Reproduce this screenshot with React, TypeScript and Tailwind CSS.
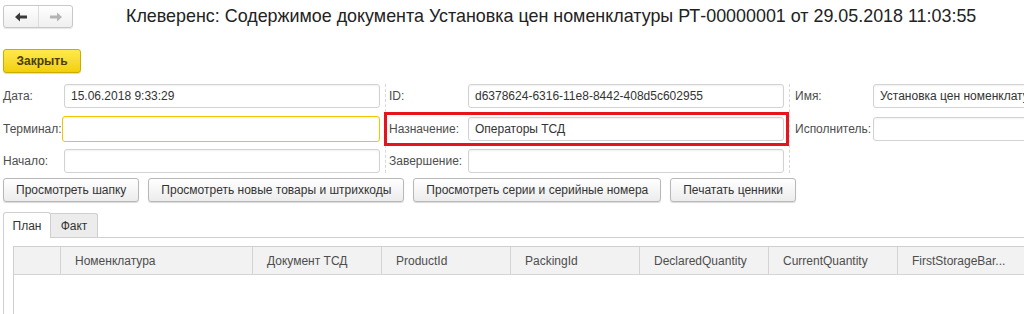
import { ReactNode } from "react";

const font = { fontFamily: '"Liberation Sans", Arial, sans-serif' };

const Arrow = ({ dir, color }: { dir: "left" | "right"; color: string }) => (
  <svg width="12" height="10" viewBox="0 0 12 10">
    <g transform={dir === "right" ? "translate(12,0) scale(-1,1)" : undefined} fill={color}>
      <path d="M0 5 L5 0.5 L5 3.5 L12 3.5 L12 6.5 L5 6.5 L5 9.5 Z" />
    </g>
  </svg>
);

const Field = ({ value, className = "" }: { value?: string; className?: string }) => (
  <div
    className={`h-[24px] rounded-[3px] border bg-white pl-[6px] text-[12px] leading-[22px] text-[#333] whitespace-nowrap overflow-hidden shadow-[inset_0_1px_2px_rgba(0,0,0,0.06)] ${
      className || "border-[#d2d2d2]"
    }`}
  >
    {value}
  </div>
);

const Row = ({ label, labelW, children, extra = "" }: { label: string; labelW: string; children: ReactNode; extra?: string }) => (
  <div className={`flex items-center h-[24px] ${extra}`}>
    <div className={`${labelW} shrink-0 text-[12px] text-[#4d4d4d]`}>{label}</div>
    <div className="flex-1 min-w-0">{children}</div>
  </div>
);

const Btn = ({ children }: { children: ReactNode }) => (
  <button className="h-[24px] px-[12px] rounded-[3px] border border-[#b8b8b8] bg-gradient-to-b from-white to-[#ececec] text-[12px] text-[#333] shadow-[0_1px_1px_rgba(0,0,0,0.15)]">
    {children}
  </button>
);

const cols = [
  { name: "", w: "w-[47px]" },
  { name: "Номенклатура", w: "w-[192px]" },
  { name: "Документ ТСД", w: "w-[129px]" },
  { name: "ProductId", w: "w-[129px]" },
  { name: "PackingId", w: "w-[129px]" },
  { name: "DeclaredQuantity", w: "w-[129px]" },
  { name: "CurrentQuantity", w: "w-[129px]" },
  { name: "FirstStorageBar...", w: "w-[140px]" },
];

export default function App() {
  return (
    <div className="w-[1024px] h-[314px] overflow-hidden bg-white" style={font}>
      {/* header */}
      <div className="flex items-center h-[32px] pl-[3px]">
        <div className="flex h-[23px] mt-[1px] rounded-[3px] border border-[#c8c8c8] bg-gradient-to-b from-white to-[#efefef] shadow-[0_1px_1px_rgba(0,0,0,0.1)]">
          <div className="w-[35px] flex items-center justify-center border-r border-[#dcdcdc]">
            <Arrow dir="left" color="#3a3a3a" />
          </div>
          <div className="w-[33px] flex items-center justify-center">
            <Arrow dir="right" color="#b4b4b4" />
          </div>
        </div>
        <div className="ml-[53px] text-[17.9px] text-[#222] whitespace-nowrap">
          Клеверенс: Содержимое документа Установка цен номенклатуры РТ-00000001 от 29.05.2018 11:03:55
        </div>
      </div>

      {/* close */}
      <div className="pl-[3px] mt-[16px]">
        <button className="h-[24px] w-[78px] rounded-[3px] border border-[#c9ae00] bg-gradient-to-b from-[#ffe94a] to-[#f2cf00] text-[12px] font-bold text-[#4a3c00] shadow-[0_1px_1px_rgba(0,0,0,0.15)]">
          Закрыть
        </button>
      </div>

      {/* form */}
      <div className="flex mt-[11px] pl-[3px] h-[89px]">
        <div className="w-[377px] shrink-0 flex flex-col gap-[8px]">
          <Row label="Дата:" labelW="w-[61px]">
            <Field value="15.06.2018 9:33:29" />
          </Row>
          <Row label="Терминал:" labelW="w-[59px]" extra="mt-[1px]">
            <Field className="border-[#f5c400] h-[26px]" />
          </Row>
          <Row label="Начало:" labelW="w-[61px]">
            <Field />
          </Row>
        </div>
        <div className="w-[5px] shrink-0 ml-[1px] border-r border-dashed border-[#d8d8d8]" />
        <div className="w-[403px] shrink-0 flex flex-col gap-[8px] pl-[3px] pr-[5px]">
          <Row label="ID:" labelW="w-[79px]">
            <Field value="d6378624-6316-11e8-8442-408d5c602955" />
          </Row>
          <Row label="Назначение:" labelW="w-[79px]" extra="mt-[1px] outline-[3px] outline-[#e8141c] outline-offset-[2px]">
            <Field value="Операторы ТСД" />
          </Row>
          <Row label="Завершение:" labelW="w-[79px]">
            <Field />
          </Row>
        </div>
        <div className="w-[1px] shrink-0 border-r border-dashed border-[#d8d8d8]" />
        <div className="w-[250px] shrink-0 flex flex-col gap-[8px] pl-[5px]">
          <Row label="Имя:" labelW="w-[78px]">
            <Field value="Установка цен номенклатуры РТ-00000001" />
          </Row>
          <Row label="Исполнитель:" labelW="w-[78px]" extra="mt-[1px]">
            <Field />
          </Row>
        </div>
      </div>

      {/* buttons */}
      <div className="flex gap-[9px] pl-[3px] mt-[5px]">
        <Btn>Просмотреть шапку</Btn>
        <Btn>Просмотреть новые товары и штрихкоды</Btn>
        <Btn>Просмотреть серии и серийные номера</Btn>
        <Btn>Печатать ценники</Btn>
      </div>

      {/* tabs */}
      <div className="pl-[3px] mt-[10px]">
        <div className="flex items-end h-[25px]">
          <div className="h-[26px] w-[48px] -mb-[1px] z-10 relative bg-white border border-b-0 border-[#cfcfcf] rounded-t-[3px] text-[12px] text-[#333] flex items-center justify-center">
            План
          </div>
          <div className="h-[24px] w-[47px] bg-[#ececec] border border-l-0 border-b-0 border-[#cfcfcf] rounded-tr-[3px] text-[12px] text-[#333] flex items-center justify-center">
            Факт
          </div>
          <div className="flex-1" />
        </div>
        <div className="border-t border-l border-[#cfcfcf] h-[80px] pl-[9px] pt-[8px]">
          <div className="border-l border-t border-[#cfcfcf] h-[80px]">
            <div className="flex h-[28px] bg-[#f2f2f2] border-b border-[#d4d4d4]">
              {cols.map((c, i) => (
                <div
                  key={i}
                  className={`${c.w} shrink-0 border-r border-[#d4d4d4] pl-[14px] text-[12px] text-[#4d4d4d] flex items-center whitespace-nowrap`}
                >
                  {c.name}
                </div>
              ))}
            </div>
          </div>
        </div>
      </div>
    </div>
  );
}
